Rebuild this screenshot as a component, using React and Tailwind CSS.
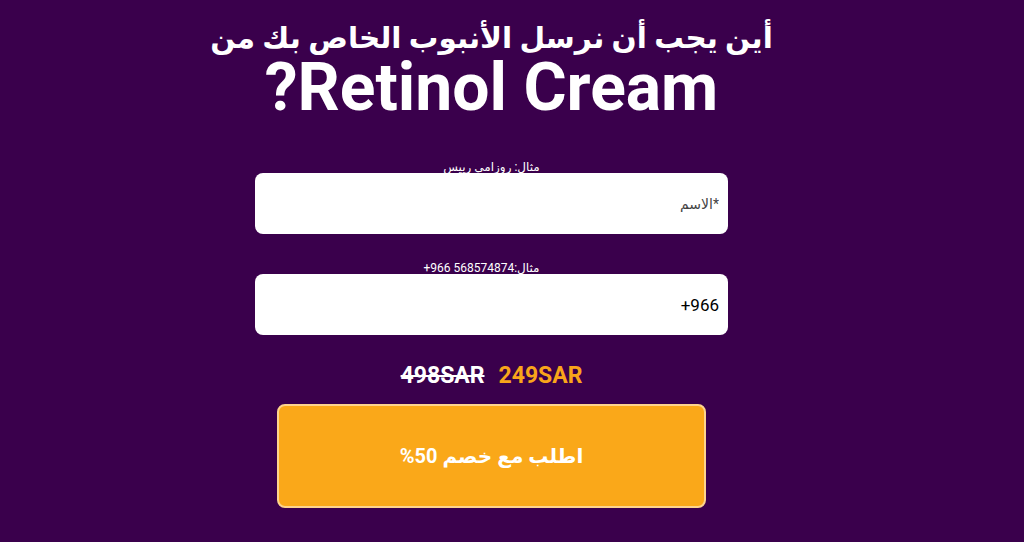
export default function App() {
  return (
    <div className="min-h-[542px] w-full bg-[#3a004c] overflow-hidden" style={{ fontFamily: 'Roboto, "DejaVu Sans", sans-serif' }}>
      <div dir="rtl" className="w-[983px] flex flex-col items-center">
        <h1 className="mt-[18px] text-white font-bold text-center text-[29.5px] leading-[40px]">
          أين يجب أن نرسل الأنبوب الخاص بك من
        </h1>
        <h1 className="text-white font-bold text-center text-[66px] leading-[60px]">
          Retinol Cream?
        </h1>
        <div className="mt-[42px] w-[473px] flex flex-col items-center">
          <label className="text-white text-[12px] leading-[14px] -mb-[1px]">مثال: روزامي رييس</label>
          <input
            className="w-full h-[61px] rounded-[8px] bg-white px-[9px] text-[14px] text-gray-700 placeholder:text-[#444] outline-none"
            placeholder="*الاسم"
          />
          <label className="mt-[27px] mr-[20px] text-white text-[12px] leading-[14px] -mb-[1px]">مثال:568574874 966+</label>
          <input
            dir="ltr"
            className="w-full h-[61px] rounded-[8px] bg-white px-[9px] text-right text-[17px] text-black outline-none"
            defaultValue="+966"
          />
        </div>
        <div dir="ltr" className="mt-[27px] flex items-center gap-[14px] font-bold text-[23px] leading-[28px]">
          <span className="text-white line-through decoration-2">498SAR</span>
          <span className="text-[#f9a51a]">249SAR</span>
        </div>
        <button className="mt-[14px] w-[429px] h-[104px] rounded-[8px] bg-[#faa819] border-2 border-[#fdd48d] text-white font-bold text-[20px]">
          اطلب مع خصم 50%
        </button>
      </div>
    </div>
  );
}
